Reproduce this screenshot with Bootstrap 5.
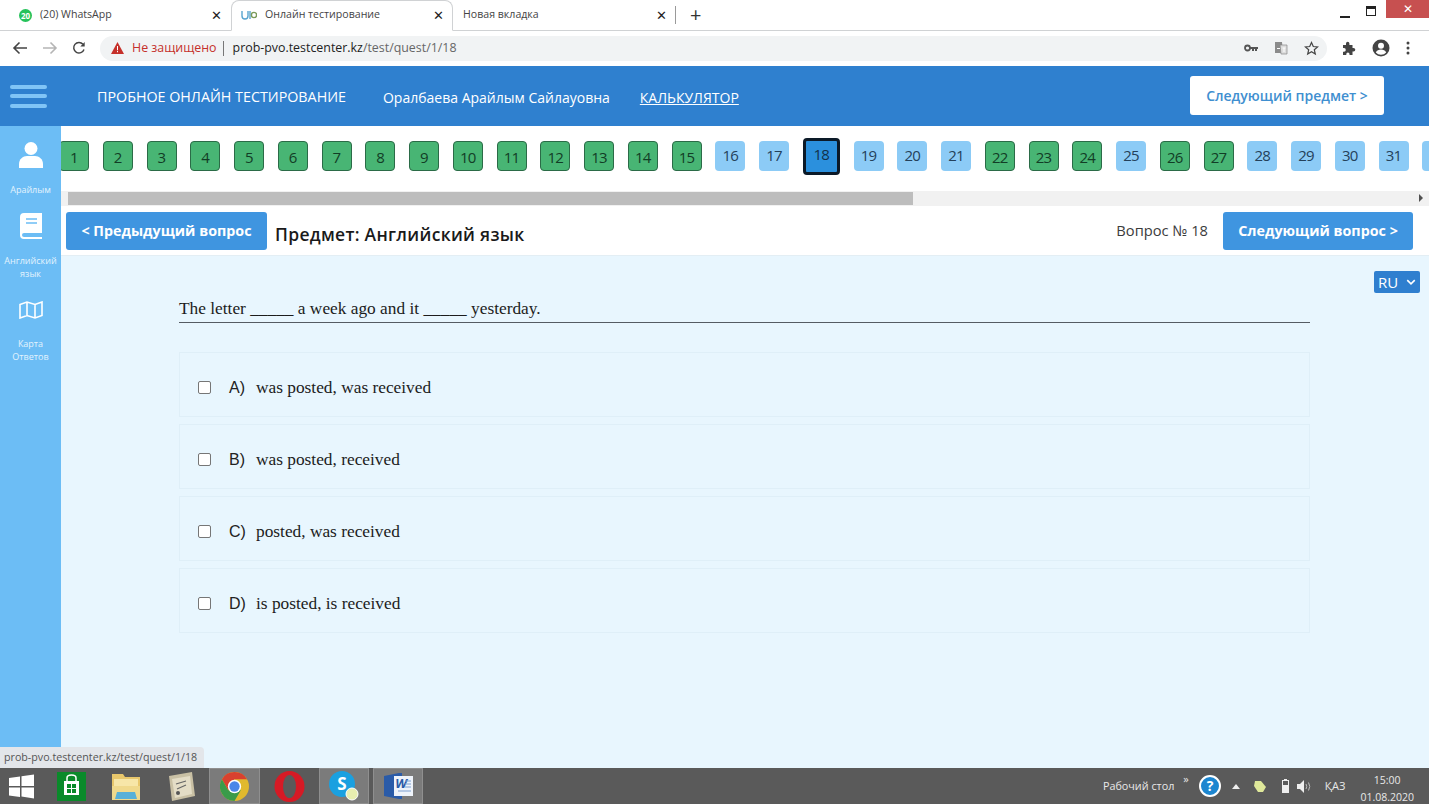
<!DOCTYPE html>
<html lang="en">
<head>
    <meta charset="UTF-8">
    <title>Онлайн тестирование</title>
    <link href="https://cdn.jsdelivr.net/npm/bootstrap@5.3.0/dist/css/bootstrap.min.css" rel="stylesheet">
    <style>
        html, body { height: 100%; }
        body {
            font-family: "Open Sans", sans-serif;
            background: #e8f6fe;
            color: #212529;
            overflow: hidden;
            display: flex;
            flex-direction: column;
        }
        /* browser frame */
        .tab-strip { height: 31px; background: #fff; border-bottom: 1px solid #d0d2d4; font-size: 10.6px; color: #444; flex: none; }
        .tab-item { width: 222px; height: 31px; padding: 0 8px 0 10px; flex: none; }
        .tab-item.first { width: 231px; padding-left: 19px; padding-right: 9px; }
        .tab-item.active { border: 1px solid #d0d2d4; border-bottom-color: #fff; border-radius: 8px 8px 0 0; padding-left: 9px; }
        .tab-close { margin-left: auto; font-size: 13px; line-height: 1; color: #222; }
        .plus-sign { font-size: 20px; line-height: 1; color: #333; margin-left: 14px; }
        .tab-sep { width: 1px; height: 18px; background: #9a9a9a; }
        .win-close { width: 43px; height: 18px; background: #c75050; color: #fff; font-size: 12px; line-height: 18px; text-align: center; align-self: flex-start; }
        .win-min { width: 10px; height: 2px; background: #222; margin-right: 16px; margin-top: 3px; }
        .win-max { width: 10px; height: 10px; border: 1px solid #222; border-top-width: 3px; margin-right: 10px; margin-top: -8px; }
        .tool-bar { height: 35px; background: #fff; padding: 0 19px 1px 12px; flex: none; }
        .tool-gap { margin-right: 14px; }
        .omni-box { flex: 1; height: 25px; border-radius: 13px; background: #f1f3f4; margin: 0 15px 0 14px; padding: 0 8px 0 11px; font-size: 12.4px; }
        .warn-text { color: #c5302a; margin-left: 8px; }
        .omni-sep { width: 1px; height: 15px; background: #777; margin: 0 9px 0 6px; }
        .url-host { color: #222; }
        .url-path { color: #666; }
        /* site header */
        .site-header { height: 60px; background: #2f80cf; padding: 0 45px 0 10px; flex: none; font-size: 14.3px; color: #fff; }
        .burger-bars { width: 37px; margin-right: 50px; }
        .burger-bars span { display: block; height: 4px; border-radius: 2px; background: #80c4f6; margin: 5.5px 0; }
        .head-label { margin: 2px 37px 0 0; }
        .head-label.person-name { font-size: 14px; }
        .head-link { color: #fff; margin: 2px 0 0 -7px; font-size: 14px; }
        .next-subject { width: 194px; height: 39px; margin-top: -2px; background: #fff; color: #3f8fd0; font-size: 14px; font-weight: 600; border: none; border-radius: 3px; }
        /* sidebar */
        .main-area { flex: 1; min-height: 0; }
        .side-rail { width: 61px; background: #6cbdf5; color: #e3f3fd; font-size: 9px; line-height: 13px; text-align: center; flex: none; }
        .side-item svg { display: block; margin: 0 auto; }
        .person-cell { padding-top: 16px; }
        .person-cell .side-cap { margin-top: 15px; }
        .book-cell { padding-top: 17px; }
        .book-cell .side-cap { margin-top: 15px; }
        .map-cell { padding-top: 21px; }
        .map-cell .side-cap { margin-top: 18px; }
        .work-col { min-width: 0; flex: 1; }
        /* question tiles */
        .tile-strip { height: 65px; background: #fff; overflow: hidden; padding-top: 12px; flex: none; }
        .tile-row { margin-left: -2px; gap: 13.75px; }
        .q-tile { width: 30px; height: 30px; margin-top: 3px; border-radius: 4px; font-size: 15px; letter-spacing: -.8px; line-height: 30px; text-align: center; flex: none; }
        .q-tile.done { background: #48b574; border: 1px solid #2b6b47; color: #123d26; line-height: 31px; }
        .q-tile.open { background: #8ccbf6; color: #24415a; line-height: 28px; }
        .q-tile.current { width: 37px; height: 37px; margin-top: 0; background: #2b90dd; border: 3px solid #0c1a28; color: #12304a; line-height: 27px; }
        .fake-scroll { height: 15px; background: #f1f1f1; flex: none; padding: 1px 0 1px 7px; }
        .fake-thumb { width: 845px; height: 13px; background: #bdbdbd; }
        .scroll-arrow { width: 0; height: 0; border-left: 4px solid #505050; border-top: 4px solid transparent; border-bottom: 4px solid transparent; margin-left: auto; margin-right: 6px; margin-top: 2px; }
        /* subject bar */
        .subject-bar { height: 50px; background: #fff; border-bottom: 1px solid #e3eef4; padding: 0 16px 0 5px; flex: none; }
        .nav-q-btn { height: 38px; background: #3f95e0; color: #fff; font-size: 14.3px; font-weight: 700; border: none; border-radius: 3px; padding: 0; }
        .nav-q-btn:hover { background: #3f95e0; color: #fff; }
        .prev-q { width: 201px; }
        .next-q { width: 190px; }
        .subject-title { font-size: 17.5px; font-weight: 600; margin: 8px 0 0 8px; letter-spacing: .3px; color: #1a1a1a; }
        .q-number { font-size: 14.7px; color: #3c3c3c; margin: 0 15px 0 auto; }
        /* question */
        .question-pane { flex: 1; position: relative; padding: 0 119px 0 118px; }
        .lang-select { position: absolute; right: 9px; top: 15px; width: 46px; height: 22px; padding: 0 0 0 4px; font-size: 15px; line-height: 22px; border: none; border-radius: 2px; color: #fff; background-color: #2f7fcf; background-position: right 4px center; background-size: 10px; background-image: url("data:image/svg+xml,%3csvg xmlns='http://www.w3.org/2000/svg' viewBox='0 0 16 16'%3e%3cpath fill='none' stroke='%23fff' stroke-width='2.5' d='m2 5 6 6 6-6'/%3e%3c/svg%3e"); }
        .question-text { font-family: "Liberation Serif", serif; font-size: 17.33px; line-height: 24px; padding-top: 41px; padding-bottom: 1px; border-bottom: 1px solid #555c63; margin-bottom: 29px; color: #1c1c1c; }
        .answer-box { height: 65px; border: 1px solid #dfeff8; padding: 0 18px; margin-bottom: 7px; }
        .answer-box .form-check-input { width: 13px; height: 13px; margin: 5px 18px 0 0; border: 1px solid #767676; border-radius: 2px; flex: none; }
        .answer-letter { width: 27px; font-family: "Liberation Sans", sans-serif; font-size: 16px; color: #222; margin-top: 6px; }
        .answer-text { font-family: "Liberation Serif", serif; font-size: 17.33px; color: #1c1c1c; margin-top: 7px; }
        /* status and taskbar */
        .status-tip { position: absolute; left: 0; bottom: 36px; width: 204px; height: 21px; background: #e3e6ea; border-top-right-radius: 4px; font-size: 10.7px; line-height: 21px; padding-left: 4px; color: #555; white-space: nowrap; }
        .task-bar { height: 36px; background: #5a5a5a; color: #e8e8e8; font-size: 12px; flex: none; padding-right: 15px; }
        .task-slot { height: 36px; display: flex; align-items: center; justify-content: center; flex: none; }
        .task-slot.lit { background: #7b7b7b; border: 1px solid #8f8f8f; }
        .slot-start { width: 43px; }
        .slot-store { width: 56px; }
        .slot-files { width: 54px; }
        .slot-notes { width: 56px; }
        .slot-chrome { width: 51px; }
        .slot-opera { width: 59px; }
        .slot-skype { width: 50px; }
        .slot-word { width: 50px; margin-left: 4px; }
        .tray-label { font-size: 10.8px; }
        .tray-more { font-size: 11px; margin: -14px 0 0 9px; }
        .tray-help { margin-left: 10px; }
        .tray-up { margin-left: 11px; }
        .tray-lemon { margin-left: 13px; }
        .tray-power { margin-left: 15px; }
        .tray-sound { margin-left: 8px; }
        .tray-lang { font-size: 11px; margin-left: 13px; }
        .clock-box { font-size: 10.5px; line-height: 17px; text-align: center; margin: 5px 0 0 15px; }
    </style>
</head>
<body>
    <div class="tab-strip d-flex align-items-center">
        <div class="tab-item first d-flex align-items-center gap-2">
            <svg width="13" height="13" viewBox="0 0 13 13"><circle cx="6.5" cy="6.5" r="6.5" fill="#25c25a"/><text x="6.5" y="9.5" font-size="8" font-weight="700" fill="#fff" text-anchor="middle">20</text></svg>
            <span>(20) WhatsApp</span><span class="tab-close">✕</span>
        </div>
        <div class="tab-item active d-flex align-items-center gap-2">
            <svg width="16" height="10" viewBox="0 0 16 10"><path d="M1 1v5q0 3 3 3t3-3V1M9 1v8" fill="none" stroke="#5aa5cf" stroke-width="1.4"/><circle cx="13" cy="5" r="2.6" fill="none" stroke="#7a9a5a" stroke-width="1.4"/></svg>
            <span>Онлайн тестирование</span><span class="tab-close">✕</span>
        </div>
        <div class="tab-item d-flex align-items-center">
            <span>Новая вкладка</span><span class="tab-close">✕</span>
        </div>
        <span class="tab-sep"></span>
        <span class="plus-sign">+</span>
        <div class="ms-auto d-flex align-items-center h-100">
            <span class="win-min"></span>
            <span class="win-max"></span>
            <span class="win-close">✕</span>
        </div>
    </div>

    <div class="tool-bar d-flex align-items-center">
        <svg class="tool-gap" width="16" height="14" viewBox="0 0 16 14"><path d="M15 7H2M7.5 1.5 2 7l5.5 5.5" fill="none" stroke="#444" stroke-width="1.6"/></svg>
        <svg class="tool-gap" width="16" height="14" viewBox="0 0 16 14"><path d="M1 7h13M8.5 1.5 14 7l-5.5 5.5" fill="none" stroke="#b5b5b5" stroke-width="1.6"/></svg>
        <svg width="14" height="14" viewBox="0 0 14 14"><path d="M12 8.5A5.3 5.3 0 1 1 11 3.2" fill="none" stroke="#444" stroke-width="1.5"/><path d="M12.7 1v4.4H8.3z" fill="#444"/></svg>
        <div class="omni-box d-flex align-items-center">
            <svg width="13" height="12" viewBox="0 0 13 12"><path d="M6.5 0 13 12H0z" fill="#c5302a"/><path d="M6 4h1v4.300H6zM6 9h1v1.300H6z" fill="#fff"/></svg>
            <span class="warn-text">Не защищено</span><span class="omni-sep"></span>
            <span class="url-host">prob-pvo.testcenter.kz</span><span class="url-path">/test/quest/1/18</span>
            <div class="ms-auto d-flex align-items-center gap-3">
                <svg width="14" height="14" viewBox="0 0 14 14"><circle cx="3.500" cy="7" r="2.500" fill="none" stroke="#555" stroke-width="1.800"/><path d="M6 6h8v2h-1v2h-2V8h-1v2H8V8H6z" fill="#555"/></svg>
                <svg width="14" height="14" viewBox="0 0 14 14"><path d="M1 1h7l1 11H1z" fill="#8b8b8b"/><path d="M6 4h7v9H7z" fill="#ddd" stroke="#888" stroke-width=".7"/><path d="M3 7.500h3M8.500 7h3M10 7v4" stroke="#fff" stroke-width="1"/></svg>
                <svg width="15" height="15" viewBox="0 0 15 15"><path d="m7.500 1.500 1.800 4 4.300.4-3.300 2.800 1 4.300-3.800-2.300-3.800 2.300 1-4.300-3.300-2.800 4.300-.4z" fill="none" stroke="#444" stroke-width="1.200"/></svg>
            </div>
        </div>
        <div class="d-flex align-items-center gap-3">
            <svg width="14" height="14" viewBox="0 0 14 14"><path d="M1 4h3V2.500a1.700 1.700 0 0 1 3.400 0V4h3.100v3h1a1.800 1.800 0 0 1 0 3.600h-1V14H7.500v-1a1.600 1.600 0 0 0-3.200 0v1H1v-3.300h1a1.800 1.800 0 0 0 0-3.600H1z" fill="#444"/></svg>
            <svg width="18" height="18" viewBox="0 0 18 18"><circle cx="9" cy="9" r="8.500" fill="#444"/><circle cx="9" cy="6.800" r="3" fill="#fff"/><path d="M3.800 13.500c1-2.300 3-3 5.200-3s4.200.7 5.200 3a7 7 0 0 1-10.400 0" fill="#fff"/></svg>
            <svg width="4" height="14" viewBox="0 0 4 14"><circle cx="2" cy="2" r="1.500" fill="#444"/><circle cx="2" cy="7" r="1.500" fill="#444"/><circle cx="2" cy="12" r="1.500" fill="#444"/></svg>
        </div>
    </div>

    <nav class="site-header d-flex align-items-center">
        <div class="burger-bars"><span></span><span></span><span></span></div>
        <span class="head-label">ПРОБНОЕ ОНЛАЙН ТЕСТИРОВАНИЕ</span>
        <span class="head-label person-name">Оралбаева Арайлым Сайлауовна</span>
        <a class="head-link" href="#">КАЛЬКУЛЯТОР</a>
        <button class="next-subject ms-auto" type="button">Следующий предмет &gt;</button>
    </nav>

    <div class="main-area d-flex">
        <aside class="side-rail">
            <div class="side-item person-cell">
                <svg width="24" height="26" viewBox="0 0 24 26"><circle cx="12" cy="6.500" r="6.500" fill="#fff"/><path d="M0 26v-4c0-5 4-8 8-8h8c4 0 8 3 8 8v4z" fill="#fff"/></svg>
                <div class="side-cap">Арайлым</div>
            </div>
            <div class="side-item book-cell">
                <svg width="22" height="26" viewBox="0 0 22 26"><path d="M4 0h18v20H4a2 2 0 0 0 0 4h18v2H4a4 4 0 0 1-4-4V4a4 4 0 0 1 4-4z" fill="#fff"/><path d="M6 6h11M6 10h11" stroke="#6cbdf5" stroke-width="1.500"/></svg>
                <div class="side-cap">Английский<br>язык</div>
            </div>
            <div class="side-item map-cell">
                <svg width="24" height="18" viewBox="0 0 24 18"><path d="M1 3.500 8 1l8 2.500L23 1v13.500L16 17l-8-2.500L1 17zM8 1v13.500M16 3.500V17" fill="none" stroke="#fff" stroke-width="1.600"/></svg>
                <div class="side-cap">Карта<br>Ответов</div>
            </div>
        </aside>

        <div class="work-col d-flex flex-column">
            <div class="tile-strip">
                <div class="tile-row d-flex" id="tileRow"></div>
            </div>
            <div class="fake-scroll d-flex">
                <div class="fake-thumb"></div>
                <span class="scroll-arrow"></span>
            </div>
            <div class="subject-bar d-flex align-items-center">
                <button class="btn nav-q-btn prev-q" type="button">&lt; Предыдущий вопрос</button>
                <div class="subject-title">Предмет: Английский язык</div>
                <div class="q-number">Вопрос № 18</div>
                <button class="btn nav-q-btn next-q" type="button">Следующий вопрос &gt;</button>
            </div>
            <div class="question-pane">
                <select class="form-select lang-select"><option>RU</option></select>
                <div class="question-text">The letter _____ a week ago and it _____ yesterday.</div>
                <div id="answerList"></div>
            </div>
        </div>
    </div>

    <div class="status-tip">prob-pvo.testcenter.kz/test/quest/1/18</div>

    <div class="task-bar d-flex align-items-center">
        <div class="task-slot slot-start">
            <svg width="25" height="25" viewBox="0 0 25 25"><path d="M0 4l11-1.500V12H0zM12.500 2.300 25 .5V12H12.500zM0 13.500h11V23L0 21.500zM12.500 13.500H25v11l-12.500-2z" fill="#fff"/></svg>
        </div>
        <div class="task-slot slot-store">
            <svg width="29" height="29" viewBox="0 0 29 29"><rect width="29" height="29" fill="#0a8a2a"/><path d="M10 9V6q0-3 4.500-3T19 6v3" fill="none" stroke="#fff" stroke-width="1.500"/><rect x="7" y="9" width="15" height="14" fill="#fff"/><path d="M10 12h4v4h-4zM15 12h4v4h-4zM10 17h4v4h-4zM15 17h4v4h-4z" fill="#0a8a2a"/></svg>
        </div>
        <div class="task-slot slot-files">
            <svg width="30" height="29" viewBox="0 0 30 29"><path d="M1 2h11l2 3h15v23H1z" fill="#e8c76c"/><path d="M3 7h24v7H3z" fill="#f7e6a8"/><path d="M1 14h28v14H1z" fill="#f0d98c"/><path d="M6 20h18l2 7H4z" fill="#58b0d8"/></svg>
        </div>
        <div class="task-slot slot-notes">
            <svg width="27" height="29" viewBox="0 0 27 29"><path d="M1 4 24 0l3 24-23 5z" fill="#c9c0a4"/><path d="M4 7l18-3 2 18-17 4z" fill="#e4ddc6"/><path d="M8 12l10-3M9 17l9-4" stroke="#666" stroke-width="1.200"/><circle cx="10" cy="21" r="2" fill="#555"/></svg>
        </div>
        <div class="task-slot lit slot-chrome">
            <svg width="29" height="29" viewBox="0 0 48 48"><circle cx="24" cy="24" r="24" fill="#e0b92e"/><path d="M24 0a24 24 0 0 0-20.800 12L13.600 30 24 12h20.800A24 24 0 0 0 24 0" fill="#d8412f"/><path d="M3.200 12A24 24 0 0 0 24 48l10.400-18H13.600z" fill="#3a9b4a"/><circle cx="24" cy="24" r="11" fill="#fff"/><circle cx="24" cy="24" r="8.500" fill="#4a86e8"/></svg>
        </div>
        <div class="task-slot slot-opera">
            <svg width="31" height="31" viewBox="0 0 31 31"><ellipse cx="15.500" cy="15.500" rx="15" ry="15.500" fill="#d61a25"/><ellipse cx="15.500" cy="15.500" rx="6.500" ry="11.500" fill="#5a5a5a"/></svg>
        </div>
        <div class="task-slot lit slot-skype">
            <svg width="30" height="30" viewBox="0 0 30 30"><circle cx="13" cy="13" r="13" fill="#1aa0e0"/><text x="13" y="19" font-size="17" font-weight="700" fill="#fff" text-anchor="middle">S</text><circle cx="23" cy="23" r="6" fill="#e8eeb0" stroke="#fff"/></svg>
        </div>
        <div class="task-slot lit slot-word">
            <svg width="29" height="28" viewBox="0 0 29 28"><path d="M0 4 15 1h3v26h-3L0 24z" fill="#2a5ba8"/><path d="M10 4h19v20H10z" fill="#eef3fa"/><text x="17" y="16" font-size="13" font-weight="700" font-style="italic" fill="#2a5ba8" text-anchor="middle">W</text><path d="M21 9h6M21 12h6M21 15h6M14 19h13" stroke="#7d9fd0"/></svg>
        </div>
        <div class="ms-auto d-flex align-items-center">
            <span class="tray-label">Рабочий стол</span>
            <span class="tray-more">»</span>
            <svg class="tray-help" width="22" height="22" viewBox="0 0 22 22"><circle cx="11" cy="11" r="10" fill="#1c86d0" stroke="#fff" stroke-width="2"/><text x="11" y="16" font-size="14" font-weight="700" fill="#fff" text-anchor="middle">?</text></svg>
            <svg class="tray-up" width="8" height="5" viewBox="0 0 8 5"><path d="M4 0l4 5H0z" fill="#eee"/></svg>
            <svg class="tray-lemon" width="14" height="13" viewBox="0 0 14 13"><path d="M2 1h6l5 6-3 5H5L1 6z" fill="#dfe89a"/></svg>
            <svg class="tray-power" width="7" height="14" viewBox="0 0 7 14"><path d="M2 0h3v1h2v13H0V1h2z" fill="#eee"/><path d="M1 2h5v4H1z" fill="#5a5a5a"/></svg>
            <svg class="tray-sound" width="15" height="13" viewBox="0 0 15 13"><path d="M0 4h3l4-4v13L3 9H0z" fill="#eee"/><path d="M9 4q1.500 2.500 0 5M11.500 2.500q2.500 4 0 8" fill="none" stroke="#bbb"/></svg>
            <span class="tray-lang">ҚАЗ</span>
            <div class="clock-box">15:00<br>01.08.2020</div>
        </div>
    </div>

    <script>
        // tiles answered so far, the rest stay light blue
        const done = [1,2,3,4,5,6,7,8,9,10,11,12,13,14,15,22,23,24,26,27];
        const tileRow = document.getElementById("tileRow");
        for (let n = 1; n <= 32; n++) {
            const kind = n === 18 ? "current" : done.includes(n) ? "done" : "open";
            // 32 only shows its left edge in the strip
            tileRow.innerHTML += `<div class="q-tile ${kind}">${n < 32 ? n : ""}</div>`;
        }

        const answers = [
            ["A)", "was posted, was received"],
            ["B)", "was posted, received"],
            ["C)", "posted, was received"],
            ["D)", "is posted, is received"]
        ];
        document.getElementById("answerList").innerHTML = answers.map(a => `
            <div class="answer-box d-flex align-items-center">
                <input class="form-check-input" type="checkbox">
                <span class="answer-letter">${a[0]}</span>
                <span class="answer-text">${a[1]}</span>
            </div>`).join("");
    </script>
    <script src="https://cdn.jsdelivr.net/npm/bootstrap@5.3.0/dist/js/bootstrap.bundle.min.js"></script>
</body>
</html>
